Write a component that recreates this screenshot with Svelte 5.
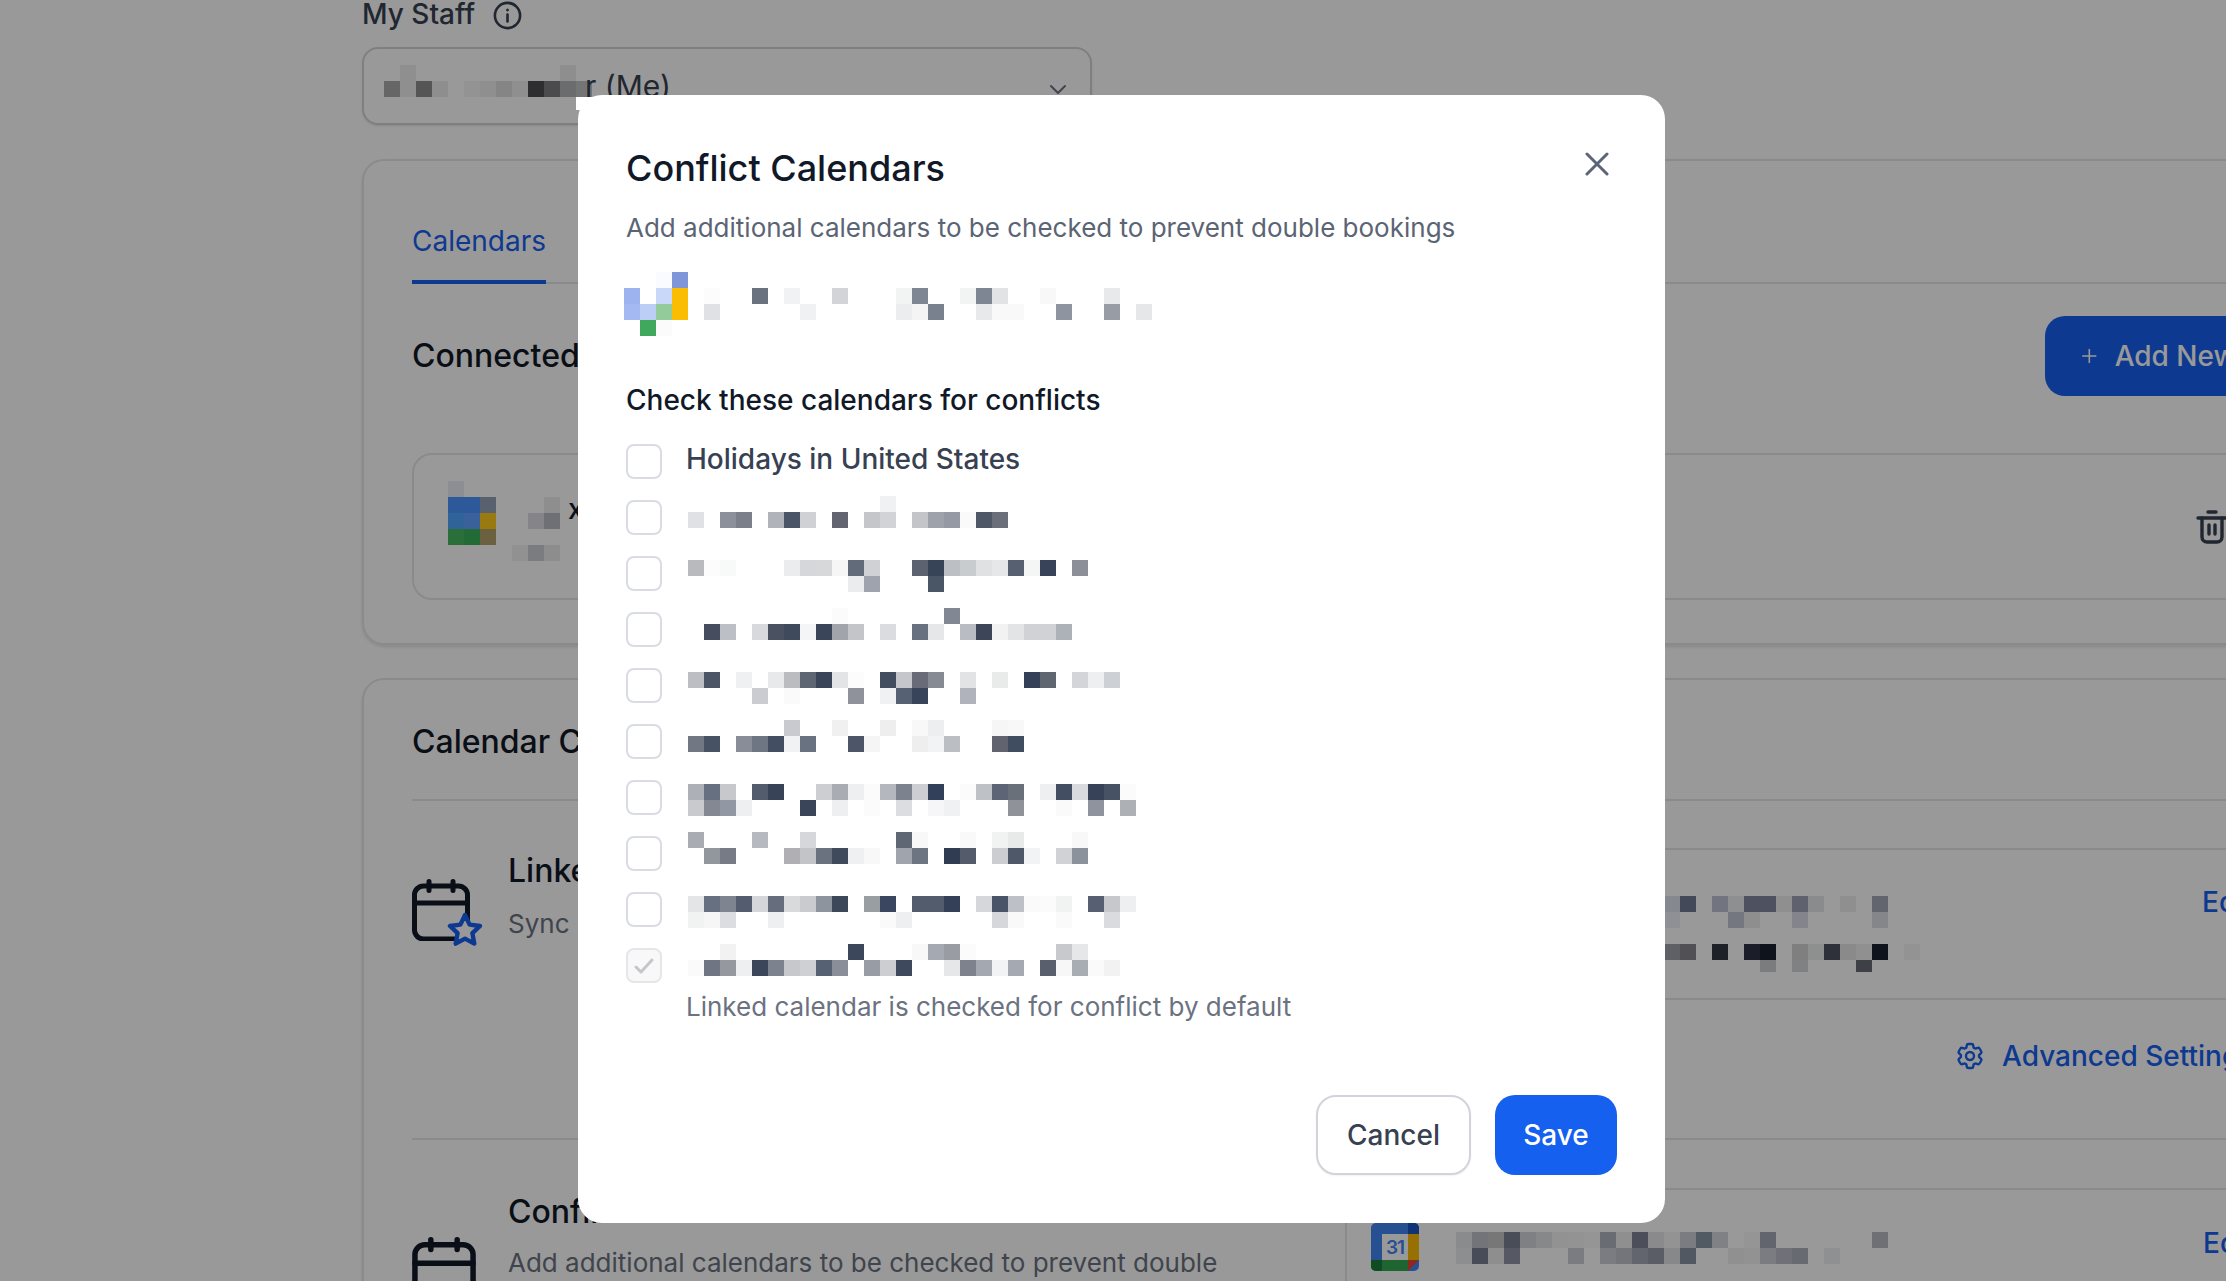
<script>
    // mosaic rows are written as "column:colour" pairs, 16px per cell
    const parse = (row) => {
        const out = [];
        for (const cell of row.split(" ").filter(Boolean)) {
            const [col, hex] = cell.split(":");
            out[+col] = "#" + hex;
        }
        return Array.from(out, (c) => c ?? null);
    };

    // the backdrop darkens the page by 40%, these colours were read through it
    const lift = (hex) => {
        if (!hex) return null;
        const n = parseInt(hex.slice(1), 16);
        const ch = [n >> 16, (n >> 8) & 255, n & 255].map((v) =>
            Math.min(255, Math.round(v / 0.6)).toString(16).padStart(2, "0")
        );
        return "#" + ch.join("");
    };

    const account = [
        "2:fafbff 3:7f97d9",
        "0:9db3f0 2:c9d7f8 3:fbbc04 5:fcfcfc 8:6a7280 10:f1f2f3 13:d2d4d7 17:f2f3f3 18:7f8693 21:f2f3f3 22:7f8693 23:e2e3e5 26:f8f8f8 30:e8e9ea",
        "0:a4b9f2 1:bccdf6 2:93cb9a 3:fbbc04 5:e0e1e4 11:f0f1f2 17:ecedee 18:f4f4f5 19:7a818e 22:e8e9eb 23:f9f9f9 24:f9f9f9 27:8f95a0 30:979ca5 32:e6e7e9",
        "1:3fa85c 2:fbfbfb"
    ];

    const calendars = [
        ["12:f0f1f2", "0:e0e1e4 2:8b909a 3:7b7f8a 5:b0b3ba 6:4a5568 7:d0d1d5 9:62656f 11:c4c6ca 12:d2d3d7 14:c3c5c9 15:9ea2ab 16:9499a3 17:fafafa 18:4f5866 19:6b6f7a"],
        ["0:b8babe 1:fcfcfc 2:f8f9f9 6:ebecee 7:d6d7da 8:d6d8da 9:f6f6f6 10:626b7a 11:d0d1d5 14:5c6270 15:374357 16:bcbfc3 17:c9ccce 18:dfe1e3 19:e6e7e8 20:566070 21:f4f5f5 22:384359 24:8c8f98", "10:ebecee 11:9ea3ad 15:4a5566"],
        ["9:fbfbfb 16:818894", "1:454d5f 2:bcbfc6 4:d8d9dc 5:4a5262 6:3f4a5c 7:f4f5f6 8:3a4559 9:a2a4ab 10:c3c5c8 12:dbdce0 14:687180 15:e6e7e8 17:b9bcc3 18:3c4658 19:f2f2f3 20:e3e4e6 21:d0d2d5 22:d0d2d5 23:adb1b8"],
        ["0:bcbec4 1:4b5565 3:eff0f1 5:e8e9ea 6:bbbcc0 7:5e6674 8:3a455a 9:e3e4e6 10:fbfcfb 12:434d60 13:c4c6cb 14:696c78 15:868a93 17:e2e3e4 19:e9eaea 21:344058 22:5f6670 24:d3d5d9 25:eeeff0 26:cdd0d4", "4:cbccd1 6:fafafa 10:8f929b 12:f0f1f2 13:566173 14:384459 17:b0b3bb"],
        ["6:c9cad0 9:f0f0f1 12:eeeeef 14:f8f8f8 15:edeeef 19:f6f6f6 20:f8f8f8", "0:717884 1:475264 3:888d97 4:6f7683 5:434e62 6:f1f2f3 7:687280 10:4c5668 11:f5f5f5 14:eeeeef 15:f2f3f4 16:bbbec2 19:61646f 20:404c5f"],
        ["0:adb0b6 1:677080 2:c6c8cc 4:535c6d 5:384358 8:ccced2 9:a9adb3 10:eeeff0 11:fbfbfb 12:b4b7be 13:7c838f 14:cdced3 15:334059 17:fbfbfb 18:bec1c6 19:5c6475 20:6a7079 22:eeeff0 23:434e62 24:d9dadd 25:374259 26:475265 27:fbfbfb", "0:c9cace 1:838892 2:9198a3 3:eeeff1 7:3a4559 9:eeeff0 11:fbfbfb 13:dcdde0 15:f6f6f8 16:f0f1f2 20:8f9298 23:fafafa 25:8e939e 27:adb1b6"],
        ["0:a9adb3 4:b6b9bf 7:d6d7da 13:5f6775 14:f8f8f8 17:f9f9f9 19:f1f2f2 20:e8e9e9 24:f8f8f8", "1:92969d 2:777b86 6:b0b0b4 7:c2c4c8 8:6a7280 9:3f4a5d 10:eff0f2 11:f8f8f8 13:a0a4ac 14:6e7582 16:303c52 17:545c6c 19:cbcdd1 20:4f5869 21:f2f3f4 23:d0d2d6 24:8c929c"],
        ["0:e4e5e6 1:667080 2:7e8490 3:545d6f 4:d5d6d9 5:666d7c 6:d9dadc 7:c9cbce 8:8e949e 9:3c475a 11:999ea3 12:3a4560 14:535c6c 15:535c6c 16:344058 18:d6d7db 19:4a5468 20:bdc0c6 21:fafafa 22:fbfbfb 23:f1f2f2 25:566072 26:c6c8cc 27:eeeff0", "0:f1f2f2 1:f6f6f6 2:dcdde0 5:eeeff0 12:fafafa 13:eeeff0 19:d6d7da 20:f9f9f9 23:fafafa 26:dadbde"],
        ["2:f2f2f3 10:3c475b 14:f8f8f8 15:a5a9b2 16:999ca3 17:fbfbfb 23:c7c9cd 24:e6e7e9", "0:fafafa 1:6f7582 2:96989f 3:eeeff0 4:3b465a 5:7c828e 6:c7c8cc 7:cfd0d4 8:576174 9:898e98 11:989ca5 12:cdced2 13:3f495d 16:e6e7e9 17:7e828d 18:a4a8b0 19:f2f3f4 20:a5a9b1 22:5a5f6d 23:f7f7f8 24:a8acb3 25:fafafa 26:f2f2f3"]
    ];

    const staffName = [
        "1:8f8f8f 11:8e8e8e",
        "0:666666 1:8f8f8f 2:555555 3:8e8e8e 5:939393 6:8f8f8f 7:858585 8:8f8f8f 9:2e2f31 10:4b4b4d 11:6b6c6d 12:747575"
    ];
    const providerIcon = [
        "0:8c8e94",
        "0:2d58a6 1:2d58a6 2:59616f",
        "0:3064ae 1:3a619f 2:a57a10",
        "0:2a6f39 1:236a36 2:6b6040"
    ];
    const providerName = [
        "2:8e8e8e",
        "1:858589 2:6f7075",
        "",
        "0:919191 1:7a7c80 2:8d8d8d"
    ];
    const linkedName = [
        "0:868890 1:444a59 3:727580 4:8e8f90 5:4d5160 6:4d5160 7:8f8f90 8:5f626e 9:8a8b8c 11:8f8f90 13:62646e",
        "0:8f9095 4:757780 5:8e8e8f 8:84858c 13:85868a",
        "",
        "0:5f6066 1:515155 3:1e2129 5:1b1e28 6:0f131d 8:7f7f80 9:8e8f8f 10:2e3139 11:8a8a8b 12:909091 13:0f131c 15:939393",
        "6:7b7c7e 8:808182 12:3e4045"
    ];
    const conflictName = [
        "0:8a8b8d 1:727479 2:777777 3:4a4d58 4:7f8084 5:87888a 6:929292 7:939393 8:959595 9:6a6c74 10:8f8f90 11:4c4f5a 12:8a8a8c 13:939393 14:7a7c82 15:515963 16:808185 18:959595 19:62646e 26:6f7076",
        "0:8d8e8f 1:484c58 2:8e8e8f 3:565964 7:7b7c82 9:7a7c82 10:73757a 11:62646e 12:5a5c66 13:878889 14:525862 17:909090 18:929292 19:7b7c82 20:6f7078 21:686a72 23:8f9091"
    ];

    const rows = (data) => data.map(parse);
    const dimmed = (data) => data.map((r) => parse(r).map(lift));
</script>

{#snippet mosaic(data)}
    <div class="mosaic">
        {#each data as row}
            <div class="mosaic-row">
                {#each row as colour}
                    <span class="px" style:background={colour}></span>
                {/each}
            </div>
        {/each}
    </div>
{/snippet}

{#snippet calendarIcon()}
    <svg class="cal-icon" viewBox="0 0 58 62" fill="none" stroke="#111827" stroke-width="5" stroke-linecap="round">
        <rect x="2.500" y="7" width="53" height="53" rx="9" />
        <path d="M2.500 24h53" />
        <path d="M17 2.500v9M41 2.500v9" />
    </svg>
{/snippet}

<div class="screen">
    <div class="page">
        <div class="staff-label">
            <span>My Staff</span>
            <svg class="info" viewBox="0 0 29 29" fill="none" stroke="#374151" stroke-width="2.6">
                <circle cx="14.5" cy="14.5" r="12.6" />
                <path d="M14.5 13.5v7" stroke-linecap="round" />
                <circle cx="14.5" cy="9" r="1" fill="#374151" stroke-width="1" />
            </svg>
        </div>
        <div class="select">
            {@render mosaic(dimmed(staffName))}
            <span class="select-text">r (Me)</span>
            <svg class="chevron" viewBox="0 0 20 20" fill="none" stroke="#6b7280" stroke-width="2" stroke-linecap="round" stroke-linejoin="round">
                <path d="M3 7l7 7 7-7" />
            </svg>
        </div>

        <section class="card first">
            <div class="tabs">
                <div class="tab">Calendars</div>
            </div>
            <div class="connected-head">
                <h2>Connected Calendars</h2>
                <button class="add-btn">
                    <svg viewBox="0 0 22 22" fill="none" stroke="white" stroke-width="2.4" stroke-linecap="round">
                        <path d="M11 1.200v19.600M1.200 11h19.600" />
                    </svg>
                    Add New Calendar
                </button>
            </div>
            <div class="connected-box">
                <div class="provider-icon">{@render mosaic(dimmed(providerIcon))}</div>
                <div class="provider-name">
                    {@render mosaic(dimmed(providerName))}
                    <span class="provider-rest">x</span>
                </div>
                <svg class="trash" viewBox="0 0 32 34" fill="none" stroke="#374151" stroke-width="3.4" stroke-linecap="round" stroke-linejoin="round">
                    <path d="M12 2h8" />
                    <path d="M2 8h28" />
                    <path d="M6 8v19a5 5 0 0 0 5 5h10a5 5 0 0 0 5-5V8" />
                    <path d="M13 15v9M19 15v9" />
                </svg>
            </div>
        </section>

        <section class="card second">
            <h2 class="config-title">Calendar Configuration</h2>
            <div class="config-row linked-row">
                <div class="config-left">
                    <div class="icon-wrap">
                        {@render calendarIcon()}
                        <svg class="star" viewBox="0 0 36 34" fill="white" stroke="#1660f0" stroke-width="4.4" stroke-linejoin="round">
                            <path d="M18 3l4.6 9.6 10.4 1.4-7.6 7.2 1.9 10.4L18 26.6 8.700 31.600l1.900-10.400L3 14l10.400-1.400z" />
                        </svg>
                    </div>
                    <div>
                        <h3>Linked Calendar</h3>
                        <p>Sync</p>
                    </div>
                </div>
                <div class="config-right">
                    <div class="linked-block">
                        <div class="linked-name">{@render mosaic(dimmed(linkedName))}</div>
                        <a class="edit" href="#edit">Edit</a>
                    </div>
                    <div class="advanced">
                        <svg viewBox="0 0 24 24" fill="none" stroke="#1660f0" stroke-width="1.8" stroke-linecap="round" stroke-linejoin="round">
                            <path d="M9.594 3.94c.09-.542.56-.94 1.11-.94h2.593c.55 0 1.02.398 1.11.94l.213 1.281c.063.374.313.686.645.87.074.04.147.083.22.127.325.196.72.257 1.075.124l1.217-.456a1.125 1.125 0 0 1 1.37.49l1.296 2.247a1.125 1.125 0 0 1-.26 1.431l-1.003.827c-.293.241-.438.613-.43.992a7.723 7.723 0 0 1 0 .255c-.008.378.137.75.43.991l1.004.827c.424.35.534.955.26 1.43l-1.298 2.247a1.125 1.125 0 0 1-1.369.491l-1.217-.456c-.355-.133-.75-.072-1.076.124a6.47 6.47 0 0 1-.22.128c-.331.183-.581.495-.644.869l-.213 1.281c-.09.543-.56.94-1.11.94h-2.594c-.55 0-1.019-.398-1.11-.94l-.213-1.281c-.062-.374-.312-.686-.644-.87a6.52 6.52 0 0 1-.22-.127c-.325-.196-.72-.257-1.076-.124l-1.217.456a1.125 1.125 0 0 1-1.369-.49l-1.297-2.247a1.125 1.125 0 0 1 .26-1.431l1.004-.827c.292-.24.437-.613.43-.991a6.932 6.932 0 0 1 0-.255c.007-.38-.138-.751-.43-.992l-1.004-.827a1.125 1.125 0 0 1-.26-1.43l1.297-2.247a1.125 1.125 0 0 1 1.37-.491l1.216.456c.356.133.751.072 1.076-.124.072-.044.146-.086.22-.128.332-.183.582-.495.644-.869l.214-1.28Z" />
                            <circle cx="12" cy="12" r="3" />
                        </svg>
                        <span>Advanced Settings</span>
                    </div>
                </div>
            </div>
            <div class="config-row conflict-row">
                <div class="config-left">
                    <div class="icon-wrap lower">{@render calendarIcon()}</div>
                    <div>
                        <h3>Conflict Calendars</h3>
                        <p class="nudge">Add additional calendars to be checked to prevent double</p>
                    </div>
                </div>
                <div class="config-right conflict-right">
                    <svg class="gcal" viewBox="0 0 48 48">
                        <rect width="48" height="48" rx="5" fill="#4285f4" />
                        <path d="M37 0h6a5 5 0 0 1 5 5v6H37z" fill="#1a56c4" />
                        <path d="M37 11h11v26H37z" fill="#fbbc04" />
                        <path d="M0 37h37v11H5a5 5 0 0 1-5-5z" fill="#34a853" />
                        <path d="M0 37h11v11H5a5 5 0 0 1-5-5z" fill="#188038" />
                        <path d="M37 37h11L37 48z" fill="#ea4335" />
                        <rect x="11" y="11" width="26" height="26" fill="white" />
                        <text x="24" y="31" text-anchor="middle" class="gcal-day">31</text>
                    </svg>
                    <div class="conflict-name">{@render mosaic(dimmed(conflictName))}</div>
                    <a class="edit" href="#edit">Edit</a>
                </div>
            </div>
        </section>
    </div>

    <div class="backdrop"></div>

    <div class="modal">
        <div class="modal-head">
            <h1>Conflict Calendars</h1>
            <svg class="close" viewBox="0 0 24 24" fill="none" stroke="#5b6478" stroke-width="3" stroke-linecap="round">
                <path d="M2 2l20 20M22 2L2 22" />
            </svg>
        </div>
        <p class="desc">Add additional calendars to be checked to prevent double bookings</p>
        <div class="account">{@render mosaic(rows(account))}</div>
        <h2 class="check-title">Check these calendars for conflicts</h2>

        <div class="list">
            <div class="item">
                <span class="checkbox"></span>
                <span class="item-label">Holidays in United States</span>
            </div>
            {#each calendars as calendar, i}
                <div class="item">
                    <span class="checkbox" class:checked={i === calendars.length - 1}>
                        {#if i === calendars.length - 1}
                            <svg viewBox="0 0 24 24" fill="none" stroke="#c4c6ca" stroke-width="3" stroke-linecap="round" stroke-linejoin="round">
                                <path d="M4 13l5 5L20 6" />
                            </svg>
                        {/if}
                    </span>
                    <div class="item-mosaic" class:up={i % 2 === 0}>{@render mosaic(rows(calendar))}</div>
                </div>
            {/each}
        </div>
        <p class="hint">Linked calendar is checked for conflict by default</p>

        <div class="footer">
            <button class="btn cancel">Cancel</button>
            <button class="btn save">Save</button>
        </div>
    </div>
</div>

<style>
    :global(body) {
        margin: 0;
        background: #fff;
    }

    .screen {
        position: relative;
        width: 2226px;
        height: 1281px;
        overflow: hidden;
        font-family: Inter, "Liberation Sans", sans-serif;
        color: #111827;
        background: #fff;
    }

    h1, h2, h3, p {
        margin: 0;
    }

    .page {
        padding-left: 362px;
        width: 2053px;
    }

    .mosaic-row {
        display: flex;
        height: 16px;
    }

    .px {
        flex: none;
        width: 16px;
        height: 16px;
    }

    .staff-label {
        display: flex;
        align-items: flex-start;
        gap: 18px;
        height: 47px;
        font-size: 28px;
        font-weight: 500;
        line-height: 28px;
        color: #374151;
    }

    .info {
        width: 29px;
        height: 29px;
        margin-top: 1px;
    }

    .select {
        display: flex;
        align-items: flex-start;
        box-sizing: border-box;
        width: 730px;
        height: 78px;
        padding: 16px 22px 0 20px;
        border: 2px solid #d1d5db;
        border-radius: 16px;
        box-shadow: 0 1px 2px rgba(0, 0, 0, 0.1);
    }

    .select-text {
        margin: 1px 0 0 -7px;
        font-size: 30px;
        line-height: 40px;
        color: #374151;
    }

    .chevron {
        width: 20px;
        height: 20px;
        margin: 14px 0 0 auto;
    }

    .card {
        box-sizing: border-box;
        border: 2px solid #e5e7eb;
        border-radius: 22px;
        padding: 0 48px;
        box-shadow: 0 2px 3px rgba(0, 0, 0, 0.1);
    }

    .card.first {
        margin-top: 34px;
        height: 486px;
    }

    .card.second {
        margin-top: 33px;
        height: 800px;
    }

    .tabs {
        height: 121px;
        border-bottom: 2px solid #e5e7eb;
    }

    .tab {
        display: inline-block;
        padding: 60px 0 19px;
        font-size: 28px;
        line-height: 40px;
        color: #1660f0;
        border-bottom: 4px solid #1660f0;
    }

    .connected-head {
        display: flex;
        align-items: center;
        justify-content: space-between;
        margin-top: 32px;
        height: 80px;
    }

    h2 {
        font-size: 32px;
        font-weight: 500;
        line-height: 40px;
    }

    .add-btn {
        display: flex;
        align-items: center;
        gap: 18px;
        box-sizing: border-box;
        width: 320px;
        height: 80px;
        padding: 0 0 0 37px;
        border: none;
        border-radius: 20px;
        background: #1660f0;
        color: #fff;
        font: 500 28px Inter, sans-serif;
        white-space: nowrap;
    }

    .add-btn svg {
        width: 22px;
        height: 22px;
    }

    .connected-box {
        display: flex;
        align-items: flex-start;
        box-sizing: border-box;
        height: 147px;
        margin-top: 57px;
        padding: 26px 135px 0 34px;
        border: 2px solid #e5e7eb;
        border-radius: 20px;
    }

    .provider-name {
        display: flex;
        margin: 16px 0 0 16px;
    }

    .provider-rest {
        margin-left: 8px;
        font-size: 28px;
        font-weight: 500;
        line-height: 24px;
    }

    .trash {
        width: 32px;
        height: 34px;
        margin: 29px 0 0 auto;
    }

    .config-title {
        padding: 42px 0 37px;
        border-bottom: 2px solid #e5e7eb;
    }

    .config-row {
        display: flex;
    }

    .linked-row {
        height: 337px;
        border-bottom: 2px solid #e5e7eb;
    }

    .config-left {
        display: flex;
        flex: none;
        width: 933px;
        white-space: nowrap;
    }

    .icon-wrap {
        position: relative;
        flex: none;
        width: 96px;
        margin-top: 78px;
    }

    .linked-row .config-left {
        padding-top: 50px;
        box-sizing: border-box;
    }

    .linked-row .icon-wrap {
        margin-top: 28px;
    }

    .icon-wrap.lower {
        margin-top: 45px;
    }

    .cal-icon {
        display: block;
        width: 58px;
        height: 62px;
    }

    .lower .cal-icon {
        width: 64px;
        height: 68px;
    }

    .star {
        position: absolute;
        left: 35px;
        top: 33px;
        width: 36px;
        height: 34px;
    }

    h3 {
        font-size: 32px;
        font-weight: 500;
        line-height: 40px;
    }

    .config-left p {
        margin-top: 13px;
        font-size: 26px;
        line-height: 40px;
        color: #6b7280;
    }

    .config-left p.nudge {
        margin-top: 11px;
    }

    .config-right {
        flex: 1;
        min-width: 0;
    }

    .linked-row .config-right {
        padding-top: 47px;
    }

    .linked-block {
        display: flex;
        box-sizing: border-box;
        height: 152px;
        padding: 46px 0 0 319px;
        border-top: 2px solid #e5e7eb;
        border-bottom: 2px solid #e5e7eb;
    }

    .linked-name {
        height: 76px;
        overflow: hidden;
    }

    .edit {
        font-size: 28px;
        font-weight: 500;
        line-height: 40px;
        color: #1660f0;
        text-decoration: none;
        position: relative;
        top: -14px;
        margin-left: 282px;
    }

    .advanced {
        display: flex;
        align-items: center;
        gap: 16px;
        margin: 39px 0 0 609px;
        font-size: 28px;
        font-weight: 500;
        color: #1660f0;
        white-space: nowrap;
    }

    .advanced svg {
        width: 32px;
        height: 32px;
    }

    .conflict-row .config-left {
        padding-top: 52px;
        box-sizing: border-box;
    }

    .conflict-right {
        display: flex;
        align-items: flex-start;
        margin-top: 48px;
        padding: 33px 0 0 24px;
        height: 400px;
        border-top: 2px solid #e5e7eb;
        border-left: 2px solid #e5e7eb;
    }

    .gcal {
        flex: none;
        width: 48px;
        height: 48px;
    }

    .gcal-day {
        font: 600 19px Inter, sans-serif;
        letter-spacing: -1px;
        fill: #4285f4;
    }

    .conflict-name {
        margin: 9px 0 0 37px;
    }

    .conflict-right .edit {
        top: 0;
        margin-left: 315px;
    }

    .backdrop {
        position: absolute;
        inset: 0;
        background: rgba(0, 0, 0, 0.4);
    }

    .modal {
        position: absolute;
        left: 578px;
        top: 95px;
        box-sizing: border-box;
        width: 1087px;
        padding: 51px 48px 48px;
        border-radius: 24px;
        background: #fff;
    }

    .modal::before {
        content: "";
        position: absolute;
        left: -2px;
        top: 2px;
        width: 24px;
        height: 13px;
        background: #fff;
    }

    .modal-head {
        display: flex;
        justify-content: space-between;
        align-items: flex-start;
    }

    h1 {
        font-size: 36px;
        font-weight: 500;
        line-height: 44px;
    }

    .close {
        width: 24px;
        height: 24px;
        margin: 6px 8px 0 0;
    }

    .desc {
        margin-top: 18px;
        font-size: 26px;
        line-height: 40px;
        color: #5b6474;
    }

    .account {
        margin: 24px 0 0 -2px;
    }

    .check-title {
        margin-top: 44px;
        font-size: 28px;
        color: #111827;
    }

    .list {
        display: flex;
        flex-direction: column;
        gap: 20px;
        margin-top: 24px;
    }

    .item {
        display: flex;
        align-items: flex-start;
        gap: 26px;
        height: 36px;
    }

    .checkbox {
        display: flex;
        align-items: center;
        justify-content: center;
        flex: none;
        box-sizing: border-box;
        width: 36px;
        height: 35px;
        border: 2.5px solid #d9dde3;
        border-radius: 8px;
    }

    .checkbox.checked {
        background: #f8f8f9;
        border-color: #e4e6e9;
    }

    .checkbox svg {
        width: 24px;
        height: 24px;
    }

    .item-label {
        margin-left: -2px;
        font-size: 28px;
        font-weight: 500;
        line-height: 30px;
        color: #374151;
    }

    .item-mosaic {
        margin-top: 4px;
    }

    .item-mosaic.up {
        margin-top: -4px;
    }

    .hint {
        margin: 8px 0 0 60px;
        font-size: 26px;
        line-height: 30px;
        color: #6b7280;
    }

    .footer {
        display: flex;
        justify-content: flex-end;
        gap: 24px;
        margin-top: 73px;
    }

    .btn {
        box-sizing: border-box;
        height: 80px;
        border-radius: 20px;
        font: 500 28px Inter, sans-serif;
    }

    .cancel {
        width: 155px;
        border: 2px solid #d1d5db;
        background: #fff;
        color: #374151;
        box-shadow: 0 1px 2px rgba(0, 0, 0, 0.06);
    }

    .save {
        width: 122px;
        border: none;
        background: #1660f0;
        color: #fff;
    }
</style>
